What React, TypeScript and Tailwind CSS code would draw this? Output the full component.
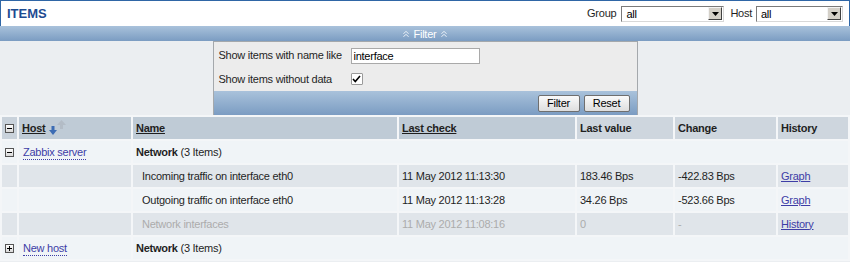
import React from "react";

function SelectBox({ width }: { width: string }) {
  return (
    <div
      className={`${width} h-[16px] shrink-0 bg-white border border-t-[#7a7a7a] border-l-[#7a7a7a] border-r-[#d8d8d8] border-b-[#d8d8d8] flex items-center justify-between pl-[4px] pr-[1px]`}
    >
      <span className="leading-[14px] text-black">all</span>
      <div className="w-[14px] h-[13px] bg-[#d4d0c8] border border-t-[#f4f4f4] border-l-[#f4f4f4] border-r-[#404040] border-b-[#404040] flex items-center justify-center">
        <svg width="7" height="4" viewBox="0 0 7 4">
          <polygon points="0,0 7,0 3.5,4" fill="#000" />
        </svg>
      </div>
    </div>
  );
}

function BoxIcon({ plus }: { plus?: boolean }) {
  return (
    <svg width="9" height="9" viewBox="0 0 9 9" className="block">
      <defs>
        <linearGradient id={plus ? "gp" : "gm"} x1="0" y1="0" x2="0" y2="1">
          <stop offset="0" stopColor="#ffffff" />
          <stop offset="1" stopColor="#d6d6d6" />
        </linearGradient>
      </defs>
      <rect x="0.5" y="0.5" width="8" height="8" fill={`url(#${plus ? "gp" : "gm"})`} stroke="#555" />
      <rect x="2" y="4" width="5" height="1" fill="#000" />
      {plus && <rect x="4" y="2" width="1" height="5" fill="#000" />}
    </svg>
  );
}

function Chevrons() {
  return (
    <svg width="6" height="8" viewBox="0 0 6 8" className="block shrink-0">
      <polyline points="0.5,3.8 3,1.3 5.5,3.8" fill="none" stroke="#eef3f8" strokeWidth="1" />
      <polyline points="0.5,6.8 3,4.3 5.5,6.8" fill="none" stroke="#eef3f8" strokeWidth="1" />
    </svg>
  );
}

function SortArrows() {
  return (
    <svg width="18" height="16" viewBox="0 0 18 16" className="block shrink-0">
      <polygon points="12.5,0 17,5 8,5" fill="#b3bcc6" />
      <rect x="11" y="5" width="3" height="4" fill="#b3bcc6" />
      <rect x="2.5" y="6" width="3" height="4" fill="#3c6cb4" />
      <polygon points="0,10 8,10 4,15" fill="#3c6cb4" />
    </svg>
  );
}

function Btn({ label, w }: { label: string; w: string }) {
  return (
    <div
      className={`${w} h-[17px] shrink-0 rounded-[2px] border border-[#6f6f6f] bg-gradient-to-b from-[#fafafa] to-[#dedede] flex items-center justify-center text-black leading-[15px]`}
    >
      {label}
    </div>
  );
}

const linkCls = "text-[#3d3da6]";

export default function App() {
  const td = "h-[22px] p-0 pl-[3px] align-middle whitespace-nowrap";
  const dark = "bg-[#e0e5ea]";
  const light = "bg-[#f0f4f7]";
  return (
    <div className="w-[850px] h-[262px] overflow-hidden bg-[#ebeef1] text-[11px] tracking-[-0.25px] text-[#1f1f1f] font-['Liberation_Sans',Arial,sans-serif]">
      {/* Title bar */}
      <div className="h-[26px] bg-white border border-b-0 border-[#2f66a6] flex items-center justify-between pl-[6px] pr-[6px]">
        <span className="text-[13px] tracking-normal font-bold text-[#1d4b91] leading-[16px]">ITEMS</span>
        <div className="flex items-center">
          <span className="mr-[5px] whitespace-nowrap">Group</span>
          <SelectBox width="w-[103px]" />
          <span className="ml-[6px] mr-[4px] whitespace-nowrap">Host</span>
          <SelectBox width="w-[87px]" />
        </div>
      </div>
      {/* Filter header */}
      <div className="h-[15px] bg-gradient-to-b from-[#a9c2db] to-[#7b9cc2] flex items-center justify-center text-white gap-[5px]">
        <Chevrons />
        <span className="leading-[14px] pt-[1px]">Filter</span>
        <Chevrons />
      </div>
      {/* Filter box */}
      <div className="flex justify-center">
        <div className="w-[425px] h-[74px] border border-[#a4a8ac] border-b-0 bg-[#ececec] flex flex-col">
          <div className="flex-1 pl-[5px] pt-[5px]">
            <div className="flex items-center h-[17px]">
              <span className="w-[132px] shrink-0 whitespace-nowrap">Show items with name like</span>
              <div className="w-[129px] h-[16px] shrink-0 bg-white border border-[#a9a9a9] pl-[2px] leading-[14px] text-black">interface</div>
            </div>
            <div className="flex items-center h-[16px] mt-[7px]">
              <span className="w-[132px] shrink-0 whitespace-nowrap">Show items without data</span>
              <div className="w-[12px] h-[12px] shrink-0 bg-white border border-[#9a9a9a] rounded-[1px] flex items-center justify-center">
                <svg width="9" height="8" viewBox="0 0 9 8">
                  <polyline points="1,4 3.3,6.5 8,1" fill="none" stroke="#000" strokeWidth="1.6" />
                </svg>
              </div>
            </div>
          </div>
          <div className="h-[24px] bg-gradient-to-b from-[#a9c2db] to-[#7b9cc2] flex items-center justify-end pr-[7px] gap-[4px]">
            <Btn label="Filter" w="w-[42px]" />
            <Btn label="Reset" w="w-[46px]" />
          </div>
        </div>
      </div>
      {/* Table */}
      <table className="w-[850px] table-fixed border-separate border-spacing-[2px] bg-[#f4f6f8]">
        <colgroup>
          <col className="w-[15px]" />
          <col className="w-[112px]" />
          <col className="w-[264px]" />
          <col className="w-[176px]" />
          <col className="w-[96px]" />
          <col className="w-[101px]" />
          <col className="w-[70px]" />
        </colgroup>
        <thead>
          <tr className="font-bold text-left">
            <th className={`${td} pl-[3px] bg-[#c9d2db]`}>
              <BoxIcon />
            </th>
            <th className={`${td} bg-[#bfcbd6]`}>
              <div className="flex items-center">
                <span className="underline">Host</span>
                <span className="ml-[4px] shrink-0">
                  <SortArrows />
                </span>
              </div>
            </th>
            <th className={`${td} bg-[#bfcbd6]`}>
              <span className="underline">Name</span>
            </th>
            <th className={`${td} bg-[#bfcbd6]`}>
              <span className="underline">Last check</span>
            </th>
            <th className={`${td} bg-[#ced6de]`}>Last value</th>
            <th className={`${td} bg-[#ced6de]`}>Change</th>
            <th className={`${td} bg-[#ced6de]`}>History</th>
          </tr>
        </thead>
        <tbody>
          <tr>
            <td className={`${td} ${light}`}>
              <BoxIcon />
            </td>
            <td className={`${td} ${light} pl-[4px]`}>
              <span className={`${linkCls} border-b border-dotted border-[#3d3da6] leading-[13px] inline-block`}>Zabbix server</span>
            </td>
            <td colSpan={5} className={`${td} ${light}`}>
              <b>Network</b> (3 Items)
            </td>
          </tr>
          <tr>
            <td className={`${td} ${dark}`}></td>
            <td className={`${td} ${dark}`}></td>
            <td className={`${td} ${dark} pl-[9px]`}>Incoming traffic on interface eth0</td>
            <td className={`${td} ${dark}`}>11 May 2012 11:13:30</td>
            <td className={`${td} ${dark}`}>183.46 Bps</td>
            <td className={`${td} ${dark}`}>-422.83 Bps</td>
            <td className={`${td} ${dark}`}>
              <span className={`${linkCls} underline`}>Graph</span>
            </td>
          </tr>
          <tr>
            <td className={`${td} ${light}`}></td>
            <td className={`${td} ${light}`}></td>
            <td className={`${td} ${light} pl-[9px]`}>Outgoing traffic on interface eth0</td>
            <td className={`${td} ${light}`}>11 May 2012 11:13:28</td>
            <td className={`${td} ${light}`}>34.26 Bps</td>
            <td className={`${td} ${light}`}>-523.66 Bps</td>
            <td className={`${td} ${light}`}>
              <span className={`${linkCls} underline`}>Graph</span>
            </td>
          </tr>
          <tr className="text-[#acacac]">
            <td className={`${td} ${dark}`}></td>
            <td className={`${td} ${dark}`}></td>
            <td className={`${td} ${dark} pl-[9px]`}>Network interfaces</td>
            <td className={`${td} ${dark}`}>11 May 2012 11:08:16</td>
            <td className={`${td} ${dark}`}>0</td>
            <td className={`${td} ${dark}`}>-</td>
            <td className={`${td} ${dark}`}>
              <span className={`${linkCls} underline`}>History</span>
            </td>
          </tr>
          <tr>
            <td className={`${td} ${light}`}>
              <BoxIcon plus />
            </td>
            <td className={`${td} ${light} pl-[4px]`}>
              <span className={`${linkCls} border-b border-dotted border-[#3d3da6] leading-[13px] inline-block`}>New host</span>
            </td>
            <td colSpan={5} className={`${td} ${light}`}>
              <b>Network</b> (3 Items)
            </td>
          </tr>
        </tbody>
      </table>
    </div>
  );
}
